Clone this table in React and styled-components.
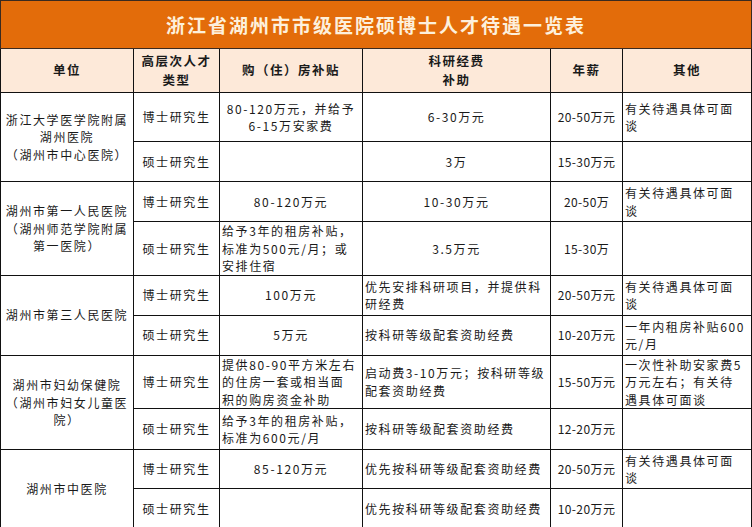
import React from "react";
import styled, { createGlobalStyle } from "styled-components";

const GlobalStyle = createGlobalStyle`
  html, body {
    margin: 0;
    padding: 0;
    background: #ffffff;
  }
`;

const Sheet = styled.table`
  border-collapse: collapse;
  table-layout: fixed;
  width: 751px;
  font-family: "Noto Sans CJK SC", "Noto Sans", sans-serif;
  color: #1a1a1a;
`;

const Row = styled.tr`
  height: ${(p) => p.h}px;
`;

const TitleCell = styled.td`
  background: #e36c0a;
  border: 1px solid #3a2a20;
  color: #fdf0dc;
  font-size: 19px;
  font-weight: 700;
  letter-spacing: 2px;
  text-align: center;
  vertical-align: middle;
  padding: 0;
`;

const HeadCell = styled.th`
  background: #fde9d9;
  border: 1px solid #111;
  font-size: 12.5px;
  font-weight: 700;
  letter-spacing: 1.5px;
  line-height: 18.5px;
  text-align: center;
  vertical-align: middle;
  padding: 0 4px;
  white-space: pre-line;
`;

const Cell = styled.td`
  border: 1px solid #111;
  font-size: 12px;
  letter-spacing: ${(p) => (p.tight ? "0.4px" : "1.6px")};
  line-height: 17.5px;
  text-align: ${(p) => p.align || "center"};
  white-space: ${(p) => (p.tight ? "nowrap" : "pre-line")};
  vertical-align: middle;
  padding: 0 ${(p) => (p.tight ? "0" : p.align === "left" ? "2px" : "3px")};
`;

const hospitals = [
  {
    name: "浙江大学医学院附属\n湖州医院\n（湖州市中心医院）",
    rows: [
      { h: 49, type: "博士研究生", house: "80-120万元，并给予\n6-15万安家费", fund: "6-30万元", pay: "20-50万元", other: "有关待遇具体可面\n谈" },
      { h: 40, type: "硕士研究生", house: "", fund: "3万", pay: "15-30万元", other: "" },
    ],
  },
  {
    name: "湖州市第一人民医院\n（湖州师范学院附属\n第一医院）",
    rows: [
      { h: 40, type: "博士研究生", house: "80-120万元", fund: "10-30万元", pay: "20-50万", other: "有关待遇具体可面\n谈" },
      { h: 52, type: "硕士研究生", house: "给予3年的租房补贴，\n标准为500元/月；或\n安排住宿", houseLeft: true, fund: "3.5万元", pay: "15-30万", other: "" },
    ],
  },
  {
    name: "湖州市第三人民医院",
    rows: [
      { h: 40, type: "博士研究生", house: "100万元", fund: "优先安排科研项目，并提供科\n研经费", fundLeft: true, pay: "20-50万元", other: "有关待遇具体可面\n谈" },
      { h: 40, type: "硕士研究生", house: "5万元", fund: "按科研等级配套资助经费", fundLeft: true, pay: "10-20万元", other: "一年内租房补贴600\n元/月" },
    ],
  },
  {
    name: "湖州市妇幼保健院\n（湖州市妇女儿童医\n院）",
    rows: [
      { h: 53, type: "博士研究生", house: "提供80-90平方米左右\n的住房一套或相当面\n积的购房资金补助", houseLeft: true, fund: "启动费3-10万元；按科研等级\n配套资助经费", fundLeft: true, pay: "15-50万元", other: "一次性补助安家费5\n万元左右；有关待\n遇具体可面谈" },
      { h: 41, type: "硕士研究生", house: "给予3年的租房补贴，\n标准为600元/月", houseLeft: true, fund: "按科研等级配套资助经费", fundLeft: true, pay: "12-20万元", other: "" },
    ],
  },
  {
    name: "湖州市中医院",
    rows: [
      { h: 39, type: "博士研究生", house: "85-120万元", fund: "优先按科研等级配套资助经费", fundLeft: true, pay: "20-50万元", other: "有关待遇具体可面\n谈" },
      { h: 40, type: "硕士研究生", house: "", fund: "优先按科研等级配套资助经费", fundLeft: true, pay: "10-20万元", other: "" },
    ],
  },
];

export default function App() {
  return (
    <>
      <GlobalStyle />
      <Sheet>
        <colgroup>
          <col style={{ width: 133 }} />
          <col style={{ width: 86 }} />
          <col style={{ width: 143 }} />
          <col style={{ width: 188 }} />
          <col style={{ width: 72 }} />
          <col style={{ width: 129 }} />
        </colgroup>
        <tbody>
          <Row h={48}>
            <TitleCell colSpan={6}>浙江省湖州市市级医院硕博士人才待遇一览表</TitleCell>
          </Row>
          <Row h={44}>
            <HeadCell>单位</HeadCell>
            <HeadCell>{"高层次人才\n类型"}</HeadCell>
            <HeadCell>购（住）房补贴</HeadCell>
            <HeadCell>{"科研经费\n补助"}</HeadCell>
            <HeadCell>年薪</HeadCell>
            <HeadCell>其他</HeadCell>
          </Row>
          {hospitals.map((hos) =>
            hos.rows.map((r, i) => (
              <Row h={r.h} key={hos.name + i}>
                {i === 0 && <Cell rowSpan={hos.rows.length}>{hos.name}</Cell>}
                <Cell>{r.type}</Cell>
                <Cell align={r.houseLeft ? "left" : "center"}>{r.house}</Cell>
                <Cell align={r.fundLeft ? "left" : "center"}>{r.fund}</Cell>
                <Cell tight>{r.pay}</Cell>
                <Cell align="left">{r.other}</Cell>
              </Row>
            ))
          )}
        </tbody>
      </Sheet>
    </>
  );
}
